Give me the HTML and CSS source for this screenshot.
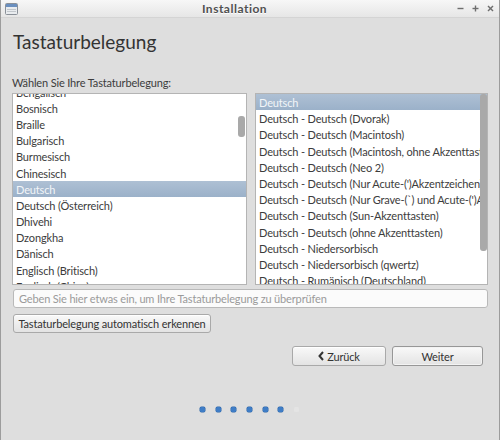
FILE: index.html
```html
<!DOCTYPE html>
<html lang="de">
<head>
<meta charset="utf-8">
<title>Installation</title>
<link rel="stylesheet" href="styles.css">
</head>
<body>
<div class="window">
  <div class="titlebar">
    <svg class="app-icon" width="13" height="12" viewBox="0 0 13 12">
      <rect x="0.5" y="0.5" width="12" height="11" rx="1" fill="#e9ecef" stroke="#8a9098"/>
      <rect x="1" y="1" width="11" height="3" fill="#6a8fbf"/>
      <line x1="2" y1="6.5" x2="11" y2="6.5" stroke="#c2c7cc"/>
      <line x1="2" y1="8.5" x2="11" y2="8.5" stroke="#c2c7cc"/>
    </svg>
    <div class="title">Installation</div>
    <div class="controls">
      <svg width="7" height="7" viewBox="0 0 7 7"><line x1="0.5" y1="3.5" x2="6.5" y2="3.5" stroke="#6e6e6e" stroke-width="1.4"/></svg>
      <svg width="7" height="7" viewBox="0 0 7 7"><line x1="0.5" y1="3.5" x2="6.5" y2="3.5" stroke="#6e6e6e" stroke-width="1.4"/><line x1="3.5" y1="0.5" x2="3.5" y2="6.5" stroke="#6e6e6e" stroke-width="1.4"/></svg>
      <svg width="7" height="7" viewBox="0 0 7 7"><line x1="1" y1="1" x2="6" y2="6" stroke="#6e6e6e" stroke-width="1.4"/><line x1="6" y1="1" x2="1" y2="6" stroke="#6e6e6e" stroke-width="1.4"/></svg>
    </div>
  </div>
  <div class="content">
    <h1 class="heading">Tastaturbelegung</h1>
    <div class="label">Wählen Sie Ihre Tastaturbelegung:</div>
    <div class="lists">
      <div class="list list-left">
        <div class="rows rows-scrolled">
          <div class="row">Bengalisch</div>
          <div class="row">Bosnisch</div>
          <div class="row">Braille</div>
          <div class="row">Bulgarisch</div>
          <div class="row">Burmesisch</div>
          <div class="row">Chinesisch</div>
          <div class="row selected">Deutsch</div>
          <div class="row">Deutsch (Österreich)</div>
          <div class="row">Dhivehi</div>
          <div class="row">Dzongkha</div>
          <div class="row">Dänisch</div>
          <div class="row">Englisch (Britisch)</div>
          <div class="row">Englisch (China)</div>
        </div>
        <div class="thumb thumb-left"></div>
      </div>
      <div class="list list-right">
        <div class="rows">
          <div class="row selected">Deutsch</div>
          <div class="row">Deutsch - Deutsch (Dvorak)</div>
          <div class="row">Deutsch - Deutsch (Macintosh)</div>
          <div class="row">Deutsch - Deutsch (Macintosh, ohne Akzenttasten)</div>
          <div class="row">Deutsch - Deutsch (Neo 2)</div>
          <div class="row">Deutsch - Deutsch (Nur Acute-(')Akzentzeichen)</div>
          <div class="row">Deutsch - Deutsch (Nur Grave-(`) und Acute-(')Akzentzeichen)</div>
          <div class="row">Deutsch - Deutsch (Sun-Akzenttasten)</div>
          <div class="row">Deutsch - Deutsch (ohne Akzenttasten)</div>
          <div class="row">Deutsch - Niedersorbisch</div>
          <div class="row">Deutsch - Niedersorbisch (qwertz)</div>
          <div class="row">Deutsch - Rumänisch (Deutschland)</div>
        </div>
        <div class="thumb thumb-right"></div>
      </div>
    </div>
    <input class="test-field" type="text" placeholder="Geben Sie hier etwas ein, um Ihre Tastaturbelegung zu überprüfen">
    <div class="detect-row">
      <button class="btn btn-detect">Tastaturbelegung automatisch erkennen</button>
    </div>
    <div class="nav">
      <button class="btn btn-nav"><svg class="chev" width="6" height="10" viewBox="0 0 6 10"><polyline points="5,1 1.5,5 5,9" fill="none" stroke="#333" stroke-width="2"/></svg>Zurück</button>
      <button class="btn btn-nav btn-default">Weiter</button>
    </div>
    <div class="dots">
      <span class="dot"></span><span class="dot"></span><span class="dot"></span><span class="dot"></span><span class="dot"></span><span class="dot"></span><span class="dot dot-off"></span>
    </div>
  </div>
</div>
</body>
</html>
```
FILE: styles.css
```css
* { box-sizing: border-box; }
html, body { margin: 0; padding: 0; }
body {
  width: 500px;
  height: 440px;
  background: #dedede;
  font-family: "Lato", "DejaVu Sans", sans-serif;
  font-size: 11px;
  letter-spacing: -0.15px;
  color: #3c3c3c;
  overflow: hidden;
}
.window {
  width: 500px;
  height: 440px;
  display: flex;
  flex-direction: column;
  border-left: 1px solid #9c9c9c;
  border-right: 1px solid #9c9c9c;
}
.titlebar {
  height: 18px;
  flex: none;
  display: flex;
  align-items: center;
  padding: 0 5px 0 4px;
  background: linear-gradient(#f7f7f7, #e6e6e6);
  border-bottom: 1px solid #d4d4d4;
}
.app-icon { flex: none; }
.title {
  flex: 1;
  text-align: center;
  font-weight: bold;
  font-size: 12px;
  color: #505050;
  letter-spacing: 0.5px;
  padding-right: 6px;
  text-shadow: 0 1px 0 #fff;
}
.controls {
  display: flex;
  gap: 8px;
  align-items: center;
}
.controls svg { display: block; }
.content {
  flex: 1;
  display: flex;
  flex-direction: column;
  padding: 0 11px 0 11px;
}
.heading {
  margin: 11px 0 0 1px;
  font-size: 19px;
  line-height: 26px;
  font-weight: normal;
  letter-spacing: 0;
  color: #333;
}
.label {
  margin-top: 20px;
  line-height: 16px;
  height: 16px;
}
.lists {
  margin-top: 2px;
  display: flex;
  gap: 8px;
  height: 192px;
}
.list {
  position: relative;
  background: #fff;
  border: 1px solid #b4b4b4;
  overflow: hidden;
}
.list-left { width: 236px; }
.list-right { width: 234px; }
.rows { display: flex; flex-direction: column; }
.rows-scrolled { margin-top: -10.4px; }
.row {
  height: 16.2px;
  line-height: 17px;
  padding-left: 3px;
  white-space: nowrap;
  color: #3c3c3c;
}
.selected {
  background: linear-gradient(#aec0d4, #9bb1c9);
  color: #f2f5f8;
}
.thumb {
  position: absolute;
  width: 7px;
  border-radius: 3px;
  background: #a9a9a9;
}
.thumb-left { right: 1px; top: 22px; height: 21px; }
.thumb-right { right: 0px; top: 0px; height: 157px; }
.test-field {
  margin-top: 4px;
  margin-left: 1px;
  width: 475px;
  height: 19px;
  border: 1px solid #b9b9b9;
  border-radius: 3px;
  background: #fbfbfb;
  font-family: inherit;
  font-size: 11px;
  letter-spacing: -0.15px;
  padding: 0 5px;
  color: #333;
  outline: none;
}
.test-field::placeholder { color: #9a9a9a; }
.detect-row {
  margin-top: 6px;
  display: flex;
}
.btn {
  font-family: inherit;
  font-size: 11px;
  letter-spacing: -0.15px;
  color: #333;
  background: linear-gradient(#f9f9f9, #e3e3e3);
  border: 1px solid #a9a9a9;
  border-radius: 3px;
  box-shadow: inset 0 1px 0 #fff;
  padding: 0;
  display: flex;
  align-items: center;
  justify-content: center;
  white-space: nowrap;
}
.btn-detect {
  margin-left: 1px;
  width: 198px;
  height: 19px;
}
.nav {
  margin-top: 13px;
  display: flex;
  justify-content: flex-end;
  gap: 6px;
  padding-right: 5px;
}
.btn-nav { height: 20px; }
.btn-nav:first-child { width: 94px; }
.btn-default {
  width: 91px;
  border-color: #979797;
  box-shadow: inset 0 0 0 1px #f3f3f3;
}
.chev { margin-right: 3px; }
.dots {
  margin-top: 41px;
  display: flex;
  justify-content: center;
  gap: 10.6px;
  padding-right: 1px;
}
.dot {
  width: 5px;
  height: 5px;
  border-radius: 1.5px;
  background: #3f7dc6;
  box-shadow: 0 0 0 0.5px #2f66a8;
}
.dot-off {
  background: #e4e4e4;
  box-shadow: none;
}
```
